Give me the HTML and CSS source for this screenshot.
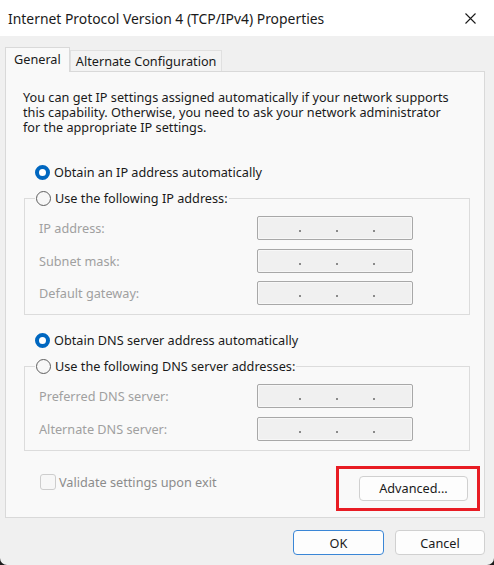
FILE: index.html
```html
<!DOCTYPE html>
<html lang="en">
<head>
    <meta charset="UTF-8">
    <meta name="viewport" content="width=device-width, initial-scale=1.0">
    <title>Internet Protocol Version 4 (TCP/IPv4) Properties</title>
    <link rel="stylesheet" href="styles.css">
</head>
<body>
    <div class="window">
        <div class="titlebar">
            <span class="title">Internet Protocol Version 4 (TCP/IPv4) Properties</span>
            <button class="close-button" aria-label="Close">
                <svg width="11" height="11" viewBox="0 0 11 11">
                    <path d="M0.5 0.5 L10.5 10.5 M10.5 0.5 L0.5 10.5" stroke="#1a1a1a" stroke-width="1.1" fill="none"/>
                </svg>
            </button>
        </div>

        <div class="content">
            <div class="tabs">
                <div class="tab active">General</div>
                <div class="tab">Alternate Configuration</div>
            </div>

            <div class="panel">
                <p class="intro">
                    You can get IP settings assigned automatically if your network supports<br>
                    this capability. Otherwise, you need to ask your network administrator<br>
                    for the appropriate IP settings.
                </p>

                <label class="option first">
                    <input type="radio" name="ip" checked>
                    <span>Obtain an IP address automatically</span>
                </label>

                <fieldset class="group">
                    <legend>
                        <label class="option">
                            <input type="radio" name="ip">
                            <span>Use the following IP address:</span>
                        </label>
                    </legend>
                    <div class="row">
                        <span class="field-label">IP address:</span>
                        <div class="ip-box"><i></i><i></i><i></i></div>
                    </div>
                    <div class="row">
                        <span class="field-label">Subnet mask:</span>
                        <div class="ip-box"><i></i><i></i><i></i></div>
                    </div>
                    <div class="row">
                        <span class="field-label">Default gateway:</span>
                        <div class="ip-box"><i></i><i></i><i></i></div>
                    </div>
                </fieldset>

                <label class="option dns">
                    <input type="radio" name="dns" checked>
                    <span>Obtain DNS server address automatically</span>
                </label>

                <fieldset class="group">
                    <legend>
                        <label class="option">
                            <input type="radio" name="dns">
                            <span>Use the following DNS server addresses:</span>
                        </label>
                    </legend>
                    <div class="row">
                        <span class="field-label">Preferred DNS server:</span>
                        <div class="ip-box"><i></i><i></i><i></i></div>
                    </div>
                    <div class="row">
                        <span class="field-label">Alternate DNS server:</span>
                        <div class="ip-box"><i></i><i></i><i></i></div>
                    </div>
                </fieldset>

                <div class="panel-bottom">
                    <label class="validate">
                        <input type="checkbox" disabled>
                        <span>Validate settings upon exit</span>
                    </label>
                    <div class="highlight">
                        <button class="button advanced">Advanced...</button>
                    </div>
                </div>
            </div>

            <div class="footer">
                <button class="button default">OK</button>
                <button class="button">Cancel</button>
            </div>
        </div>
    </div>
</body>
</html>
```

FILE: styles.css
```css
* {
    box-sizing: border-box;
}

body {
    margin: 0;
    background: #1c1c1c;
    font-family: "Noto Sans", "Open Sans", sans-serif;
    font-size: 12.7px;
    color: #1a1a1a;
}

.window {
    width: 494px;
    height: 565px;
    background: #f0f0f0;
    border-radius: 0 0 7px 7px;
    overflow: hidden;
}

.titlebar {
    height: 36px;
    background: #ffffff;
    display: flex;
    align-items: center;
    justify-content: space-between;
    padding-left: 8px;
}

.title {
    font-size: 13.9px;
}

.close-button {
    width: 46px;
    height: 36px;
    border: none;
    background: transparent;
    display: flex;
    align-items: center;
    justify-content: center;
    padding: 0 2px 0 0;
}

.content {
    padding: 11px 9px 0 5px;
}

.tabs {
    display: flex;
    align-items: flex-end;
    height: 24px;
    position: relative;
    z-index: 1;
}

.tab {
    height: 21px;
    padding: 0 5px 0 5px;
    background: #f3f3f3;
    border: 1px solid #e0e0e0;
    border-bottom: none;
    display: flex;
    align-items: center;
}

.tab.active {
    height: 25px;
    margin-bottom: -1px;
    padding: 0 8px 2px 8px;
    background: #f9f9f9;
    border-color: #d9d9d9;
}

.panel {
    height: 447px;
    background: #f9f9f9;
    border: 1px solid #d9d9d9;
    padding: 0 14px 0 18px;
}

.intro {
    margin: 18px 0 0 -1px;
    line-height: 15px;
    white-space: nowrap;
}

.option {
    display: flex;
    align-items: center;
    gap: 4px;
    height: 16px;
    white-space: nowrap;
}

.option.first {
    margin: 29px 0 0 11px;
}

.option.dns {
    margin: 17px 0 0 11px;
}

input[type="radio"] {
    appearance: none;
    width: 15px;
    height: 15px;
    margin: 0;
    border-radius: 50%;
    border: 1px solid #5f5f5f;
    background: #f7f7f7;
}

input[type="radio"]:checked {
    border: 4px solid #0067c0;
    background: #ffffff;
}

.group {
    margin: 10px 0 0 0;
    padding: 10px 14px 9px 14px;
    border: 1px solid #dcdcdc;
    display: flex;
    flex-direction: column;
    gap: 8.5px;
}

.group legend {
    padding: 0 1px;
    margin-left: -4px;
}

.row {
    display: grid;
    grid-template-columns: 218px 156px;
    align-items: center;
}

.field-label {
    color: #a0a0a0;
}

.ip-box {
    height: 24px;
    border: 1px solid #a8a8a8;
    border-radius: 2px;
    background: #f0f0f0;
    box-shadow: inset 0 0 0 1px #f7f7f7;
    display: flex;
    justify-content: center;
    align-items: flex-end;
    gap: 35px;
    padding: 0 0 7px 4px;
}

.ip-box i {
    width: 2px;
    height: 2px;
    background: #8a8a8a;
}

.panel-bottom {
    display: flex;
    justify-content: space-between;
    align-items: flex-start;
    margin: 15px -10px 0 0;
}

.validate {
    display: flex;
    align-items: center;
    gap: 3px;
    margin: 7px 0 0 16px;
    color: #8c8c8c;
}

input[type="checkbox"] {
    appearance: none;
    width: 16px;
    height: 16px;
    margin: 0;
    border: 1px solid #cdcdcd;
    border-radius: 3px;
    background: #f7f7f7;
}

.highlight {
    border: 3px solid #e81c24;
    padding: 7px 9px 7px 20px;
}

.button {
    height: 25px;
    padding: 0;
    font-family: inherit;
    font-size: 12.7px;
    color: #1a1a1a;
    background: #fdfdfd;
    border: 1px solid #d0d0d0;
    border-radius: 4px;
}

.advanced {
    width: 109px;
}

.footer {
    display: flex;
    justify-content: flex-end;
    gap: 11px;
    margin-top: 12px;
}

.footer .button {
    width: 90px;
}

.footer .button.default {
    width: 91px;
    border-color: #3a86d6;
}
```
